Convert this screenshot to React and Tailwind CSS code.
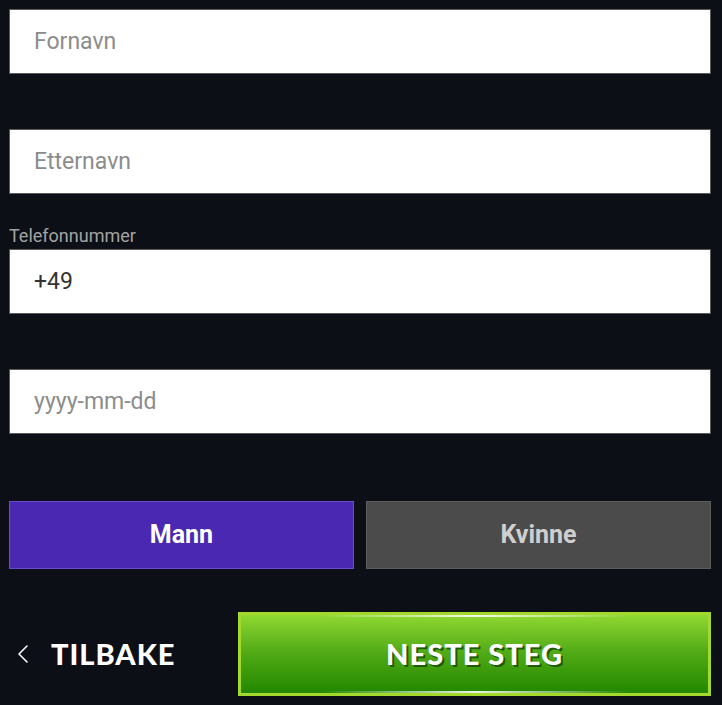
import { ChevronLeft } from "lucide-react";

const inputCls =
  "block h-[65px] w-full border border-[#5a5a5a] bg-white px-6 text-[23px] text-[#333] placeholder:text-[#8c8c8c] outline-none";

function Field({ placeholder, value, label }) {
  return (
    <div className="flex h-[120px] flex-col justify-end">
      {label && <span className="mb-[2px] text-[18px] leading-[22px] text-[#a3a3a3]">{label}</span>}
      <input className={inputCls} placeholder={placeholder} defaultValue={value} />
    </div>
  );
}

export default function App() {
  return (
    <div
      className="min-h-[705px] w-full bg-[#0c0f16] pl-[9px] pr-[11px] pt-[9px]"
      style={{ fontFamily: "Roboto, 'Noto Sans', sans-serif" }}
    >
      <input className={inputCls} placeholder="Fornavn" />
      <Field placeholder="Etternavn" />
      <Field label="Telefonnummer" value="+49" />
      <Field placeholder="yyyy-mm-dd" />
      <div className="mt-[67px] grid grid-cols-2 gap-3">
        <button className="h-[68px] border border-[#6a4ad0] bg-[#4a28b2] text-[25px] font-bold text-white">
          Mann
        </button>
        <button className="h-[68px] border border-[#5c5c5c] bg-[#4b4b4b] text-[25px] font-bold text-[#cfcfcf]">
          Kvinne
        </button>
      </div>
      <div className="mt-[43px] flex items-center">
        <button className="flex w-[229px] items-center text-white">
          <ChevronLeft className="-ml-[2px] h-8 w-8" strokeWidth={1.2} />
          <span
            className="ml-[12px] text-[29px] font-black tracking-[1px]"
            style={{ fontFamily: "Lato, sans-serif" }}
          >
            TILBAKE
          </span>
        </button>
        <button
          className="relative h-[84px] flex-1 overflow-hidden border-[3px] border-[#a4d82c] bg-gradient-to-b from-[#8fd831] via-[#4ea914] to-[#218800] text-[29px] font-black tracking-[1px] text-white [text-shadow:2px_2px_0_#1d5b06]"
          style={{ fontFamily: "Lato, sans-serif" }}
        >
          <span className="absolute left-1/2 top-0 h-[2px] w-2/3 -translate-x-1/2 bg-gradient-to-r from-transparent via-white/90 to-transparent" />
          <span className="absolute bottom-0 left-1/2 h-[2px] w-2/3 -translate-x-1/2 bg-gradient-to-r from-transparent via-white/90 to-transparent" />
          NESTE STEG
        </button>
      </div>
    </div>
  );
}
